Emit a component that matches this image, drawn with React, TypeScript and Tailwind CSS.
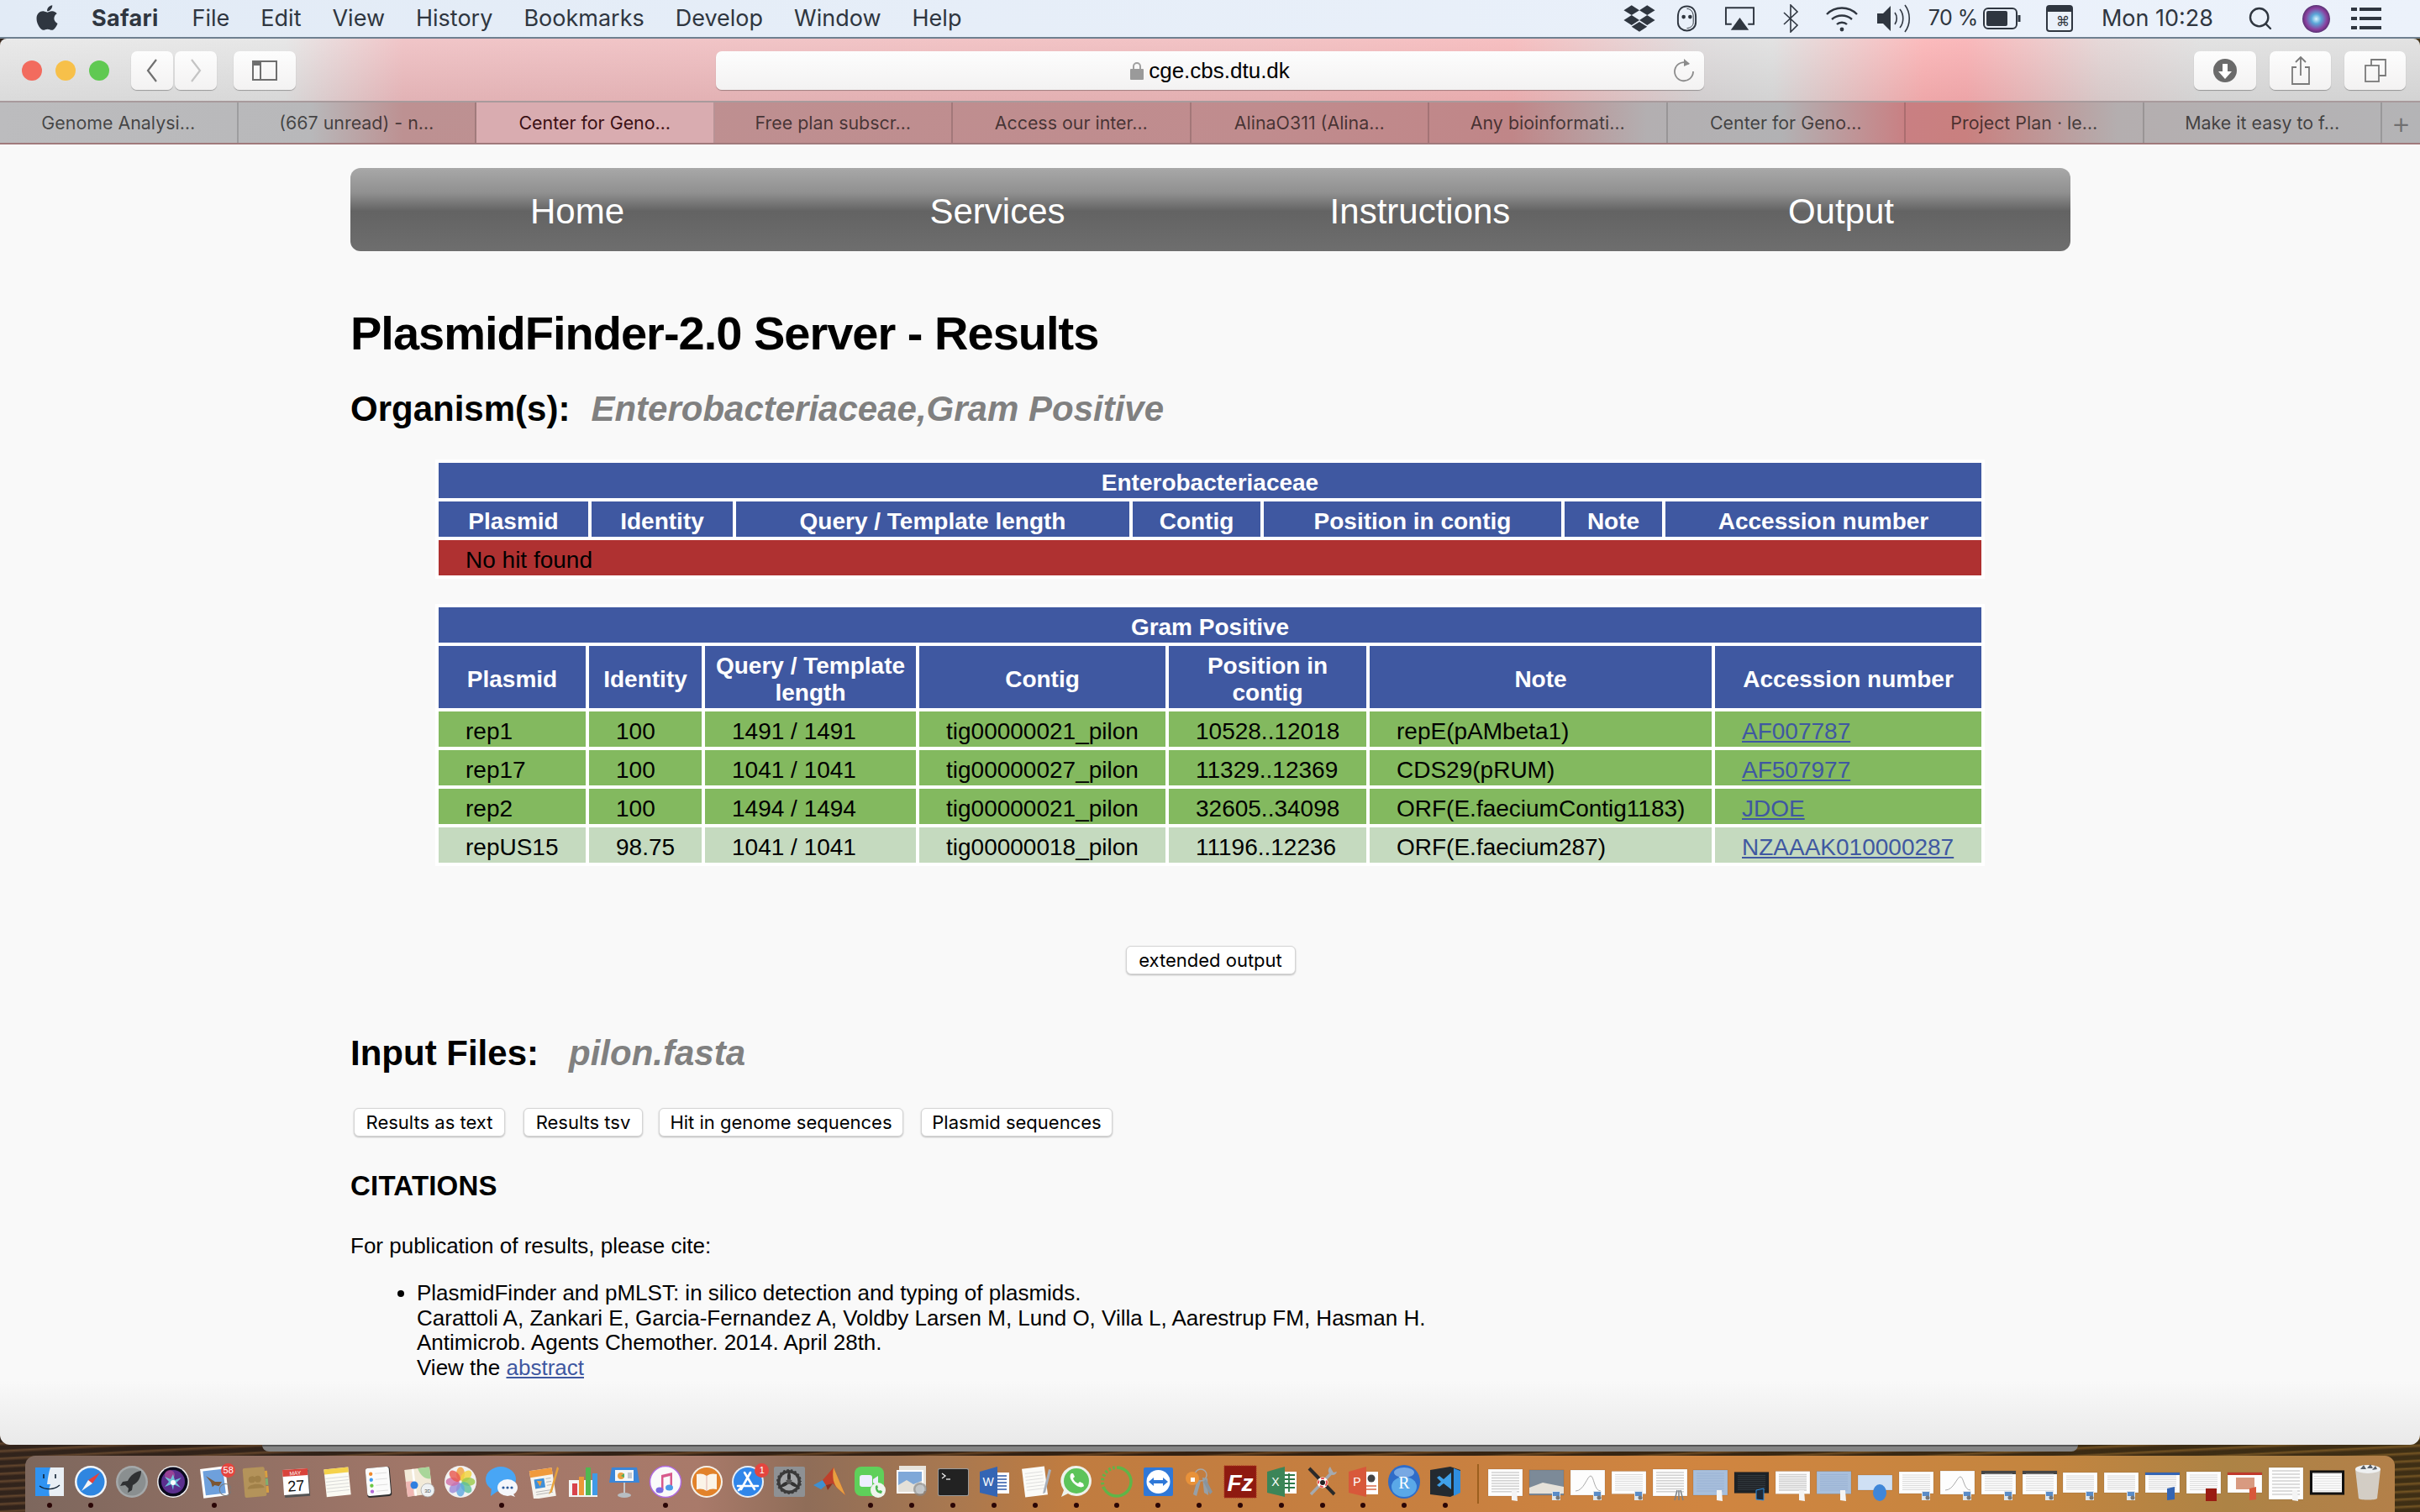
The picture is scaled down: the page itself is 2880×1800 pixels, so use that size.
import { Search } from "lucide-react";
import type { ReactNode } from "react";
import { FaApple, FaDropbox } from "react-icons/fa";

const menus = ["File", "Edit", "View", "History", "Bookmarks", "Develop", "Window", "Help"];
const tabs = [
  "Genome Analysi…",
  "(667 unread) - n…",
  "Center for Geno…",
  "Free plan subscr…",
  "Access our inter…",
  "AlinaO311 (Alina…",
  "Any bioinformati…",
  "Center for Geno…",
  "Project Plan · le…",
  "Make it easy to f…",
];

const headers = ["Plasmid", "Identity", "Query / Template length", "Contig", "Position in contig", "Note", "Accession number"];
const hits = [
  ["rep1", "100", "1491 / 1491", "tig00000021_pilon", "10528..12018", "repE(pAMbeta1)", "AF007787"],
  ["rep17", "100", "1041 / 1041", "tig00000027_pilon", "11329..12369", "CDS29(pRUM)", "AF507977"],
  ["rep2", "100", "1494 / 1494", "tig00000021_pilon", "32605..34098", "ORF(E.faeciumContig1183)", "JDOE"],
  ["repUS15", "98.75", "1041 / 1041", "tig00000018_pilon", "11196..12236", "ORF(E.faecium287)", "NZAAAK010000287"],
];

const Th = ({ children, span }: { children: ReactNode; span?: number }) => (
  <th colSpan={span} className="bg-[#3f58a1] px-2 pb-[2px] pt-[8px] text-center align-middle font-bold text-white">
    {children}
  </th>
);

const PageButton = ({ children, className }: { children: ReactNode; className: string }) => (
  <button className={`flex h-[34px] items-center justify-center rounded-[6px] border border-[#d4d4d4] bg-white font-['Inter',sans-serif] text-[22px] leading-none text-black shadow-[0_1px_2px_rgba(0,0,0,0.25)] ${className}`}>
    {children}
  </button>
);

// 맥 메뉴바 오른쪽 작은 아이콘들
const MenuIcons = () => (
  <div className="flex items-center text-[#2f3640]">
    <FaDropbox className="h-[36px] w-[38px]" />
    <svg viewBox="0 0 28 34" className="ml-[24px] h-[34px] w-[27px]" fill="none" stroke="currentColor" strokeWidth="2">
      <path d="M14 2c7 0 11 5 11 13v7c0 6-5 10-11 10S3 28 3 22v-7C3 7 7 2 14 2z" />
      <path d="M14 5c5 0 8 4 8 10v7c0 4-4 7-8 7" strokeWidth="1" />
      <circle cx="10" cy="15" r="2.4" fill="currentColor" stroke="none" />
      <circle cx="18" cy="15" r="2.4" fill="currentColor" stroke="none" />
    </svg>
    <svg viewBox="0 0 38 30" className="ml-[31px] h-[30px] w-[37px]" fill="none" stroke="currentColor" strokeWidth="2">
      <path d="M9 22H2V2h34v20h-7" />
      <path d="M19 14l11 15H8z" fill="currentColor" stroke="none" />
    </svg>
    <svg viewBox="0 0 20 34" className="ml-[32px] h-[34px] w-[20px]" fill="none" stroke="currentColor" strokeWidth="1.6">
      <path d="M2 10l16 15-8 8V1l8 8L2 24" />
    </svg>
    <svg viewBox="0 0 40 32" className="ml-[31px] h-[32px] w-[40px]" fill="none" stroke="currentColor" strokeWidth="2.4">
      <path d="M2 11c10-10 26-10 36 0M8 17c7-6 17-6 24 0M14 23c3-3 9-3 12 0" />
      <circle cx="20" cy="29" r="2.4" fill="currentColor" stroke="none" />
    </svg>
    <svg viewBox="0 0 42 36" className="ml-[21px] h-[36px] w-[42px]" fill="none" stroke="currentColor" strokeWidth="1.6">
      <path d="M1 12h7l9-9v30l-9-9H1z" fill="currentColor" stroke="none" />
      <path d="M22 11c3 4 3 10 0 14M28 7c5 6 5 16 0 22M34 2c7 9 7 23 0 32" />
    </svg>
    <span className="ml-[20px] text-[25px] tracking-[-0.5px]">70 %</span>
    <svg viewBox="0 0 46 28" className="ml-[6px] h-[28px] w-[46px]" fill="none" stroke="currentColor" strokeWidth="2">
      <rect x="1" y="2" width="39" height="24" rx="5" />
      <rect x="4" y="5" width="25" height="18" rx="2" fill="currentColor" stroke="none" />
      <path d="M43 10v8" strokeWidth="3" />
    </svg>
    <svg viewBox="0 0 32 34" className="ml-[29px] h-[34px] w-[32px]">
      <rect x="1" y="2" width="30" height="30" rx="3" fill="none" stroke="currentColor" strokeWidth="2" />
      <rect x="1" y="2" width="30" height="7" fill="currentColor" />
      <text x="20" y="26" fontSize="16" textAnchor="middle" fill="currentColor" fontFamily="DejaVu Sans">⌘</text>
    </svg>
    <span className="ml-[34px] text-[27px]">Mon 10:28</span>
    <Search className="ml-[40px] h-[32px] w-[32px]" strokeWidth={1.8} />
    <div className="ml-[34px] h-[33px] w-[33px] rounded-full bg-[radial-gradient(circle,#d8f4ff_0,#5aa7d8_25%,#8a3f9e_55%,#1b2240_90%)]" />
    <svg viewBox="0 0 36 30" className="ml-[25px] mr-[46px] h-[30px] w-[36px]" fill="currentColor">
      <rect x="0" y="2" width="7" height="4" /><rect x="10" y="2" width="26" height="4" />
      <rect x="0" y="13" width="7" height="4" /><rect x="10" y="13" width="26" height="4" />
      <rect x="0" y="24" width="7" height="4" /><rect x="10" y="24" width="26" height="4" />
    </svg>
  </div>
);

const ToolButton = ({ className, children }: { className: string; children: ReactNode }) => (
  <div className={`flex h-[46px] items-center justify-center rounded-[7px] bg-[linear-gradient(#fdfdfd,#f3f2f2)] shadow-[0_1px_1px_rgba(0,0,0,0.3)] ${className}`}>
    {children}
  </div>
);

// 독 아이콘 (40x40)
const icons: Record<string, ReactNode> = {
  finder: (
    <>
      <rect x="3" y="3" width="18" height="34" fill="#2f93f2" />
      <path d="M21 3h16v34H20c-1-5-1-8 1-14h-4c1-8 2-14 4-20z" fill="#e9eff5" />
      <path d="M13 11v5M27 11v5" stroke="#123" strokeWidth="1.6" />
      <path d="M8 25c7 5 17 5 24-1" fill="none" stroke="#123" strokeWidth="1.4" />
    </>
  ),
  safari: (
    <>
      <circle cx="20" cy="20" r="19" fill="#f2f5f8" />
      <circle cx="20" cy="20" r="16.5" fill="#2f86e0" />
      <path d="M31 9L17 18l5 4z" fill="#e8403a" />
      <path d="M9 31l8-13 5 4z" fill="#f5f5f5" />
    </>
  ),
  launchpad: (
    <>
      <circle cx="20" cy="20" r="19" fill="#a5a9aa" />
      <circle cx="20" cy="20" r="16.5" fill="#8a8f90" />
      <path d="M31 7c-8 1-13 6-16 12l-6 1-3 5 6-1 4 4-1 5 5-3 1-6c6-3 10-9 10-17z" fill="#2f3133" />
    </>
  ),
  siri: (
    <>
      <circle cx="20" cy="20" r="19" fill="#f0f0f0" />
      <circle cx="20" cy="20" r="17.5" fill="#0a0a1e" />
      <circle cx="20" cy="20" r="14" fill="#5b2f8e" />
      <circle cx="16" cy="12" r="6" fill="#b04a9a" opacity="0.7" />
      <path d="M20 11l2 7 8-3-6 6 5 6-8-4-1 7-2-7-8 3 5-6-5-6 7 3z" fill="#6fd8e4" opacity="0.85" />
      <circle cx="20" cy="21" r="3" fill="#fff" />
    </>
  ),
  mail: (
    <g transform="rotate(-7 20 20)">
      <rect x="5" y="3" width="30" height="35" fill="#fff" />
      <rect x="8" y="6" width="24" height="29" fill="#6ea0dc" />
      <path d="M11 12l10 8 8 1-4 5-5-2-3 2-1-6z" fill="#7b5533" />
      <circle cx="32" cy="31" r="7" fill="none" stroke="#777" strokeWidth="1" />
    </g>
  ),
  contacts: (
    <g transform="rotate(-5 20 20)">
      <rect x="6" y="3" width="26" height="35" rx="2" fill="#b4935a" />
      <rect x="32" y="8" width="3" height="8" fill="#d8a040" />
      <rect x="32" y="17" width="3" height="8" fill="#7fb070" />
      <rect x="32" y="26" width="3" height="8" fill="#d8a040" />
      <circle cx="16" cy="17" r="4" fill="#a08048" />
      <circle cx="23" cy="17" r="4" fill="#a08048" />
      <path d="M10 28c0-7 20-7 20 0z" fill="#a08048" />
    </g>
  ),
  calendar: (
    <g transform="rotate(-4 20 20)">
      <rect x="6" y="7" width="30" height="31" fill="#555" />
      <rect x="5" y="5" width="30" height="30" fill="#fff" />
      <rect x="5" y="5" width="30" height="8" fill="#d9423a" />
      <text x="20" y="12" fontSize="6.5" textAnchor="middle" fill="#fff" fontFamily="Liberation Sans">MAY</text>
      <text x="20" y="31" fontSize="18" textAnchor="middle" fill="#111" fontFamily="Liberation Sans">27</text>
    </g>
  ),
  notes: (
    <g transform="rotate(-6 20 20)">
      <rect x="6" y="4" width="29" height="33" fill="#fbfbf4" />
      <rect x="6" y="4" width="29" height="6" fill="#f5d24a" />
      <path d="M7 15h27M7 19h27M7 23h27M7 27h27M7 31h27" stroke="#ccc" strokeWidth="0.7" />
    </g>
  ),
  reminders: (
    <g transform="rotate(-5 20 20)">
      <rect x="6" y="3" width="29" height="35" rx="3" fill="#2f2f2f" />
      <rect x="6" y="3" width="28" height="33" rx="3" fill="#fbfbfb" />
      <circle cx="12" cy="10" r="2.2" fill="#f08a2c" />
      <circle cx="12" cy="17" r="2.2" fill="#3f9bf0" />
      <circle cx="12" cy="24" r="2.2" fill="#6cc744" />
      <circle cx="12" cy="31" r="2.2" fill="#b36ad8" />
      <path d="M17 10h14M17 17h14M17 24h14M17 31h14" stroke="#d8d8d8" strokeWidth="0.8" />
    </g>
  ),
  maps: (
    <>
      <g transform="rotate(-7 20 20)">
        <rect x="4" y="4" width="30" height="32" fill="#f2ead8" />
        <path d="M20 4h14v14c-8 0-12-6-14-14z" fill="#a9d69a" />
        <path d="M4 18h8v18H4z" fill="#f0b8b4" />
        <path d="M14 4v32" stroke="#fff" strokeWidth="2.5" />
      </g>
      <circle cx="14" cy="24" r="4.5" fill="#2f7fe0" />
      <circle cx="30" cy="30" r="8" fill="#eef1f3" stroke="#aaa" strokeWidth="0.8" />
      <text x="30" y="33" fontSize="6" textAnchor="middle" fill="#555" fontFamily="Liberation Sans">3D</text>
    </>
  ),
  photos: (
    <>
      <circle cx="20" cy="20" r="19" fill="#f1f1f1" />
      {["#f0a03c", "#f2d33d", "#9ccb4c", "#5fbf9a", "#5fa8e0", "#9c8ad8", "#d070a8", "#e85a50"].map((c, i) => (
        <ellipse key={c} cx="20" cy="10.5" rx="5" ry="8" fill={c} opacity="0.82" transform={`rotate(${i * 45} 20 20)`} />
      ))}
    </>
  ),
  messages: (
    <>
      <ellipse cx="19" cy="17" rx="18" ry="15" fill="#48a6f5" />
      <path d="M8 26l-1 11 10-7z" fill="#48a6f5" />
      <ellipse cx="27" cy="27" rx="12" ry="10" fill="#f5f7fb" />
      <path d="M33 33l3 5-8-3z" fill="#f5f7fb" />
      <circle cx="22" cy="27" r="1.6" fill="#2c5c9c" />
      <circle cx="27" cy="27" r="1.6" fill="#2c5c9c" />
      <circle cx="32" cy="27" r="1.6" fill="#2c5c9c" />
    </>
  ),
  pages: (
    <>
      <g transform="rotate(-9 20 20)">
        <rect x="6" y="5" width="27" height="34" fill="#f5f3ee" />
        <rect x="6" y="5" width="27" height="8" fill="#f09a3c" />
        <rect x="10" y="16" width="12" height="11" fill="#3f8fd8" />
        <path d="M13 18l6 1-3 6z" fill="#f0a040" />
        <path d="M24 17h6M24 21h6M24 25h6M10 31h20M10 34h20" stroke="#aaa" strokeWidth="0.8" />
      </g>
      <path d="M37 2l-8 28-2 5 4-3 8-28z" fill="#e8a23a" />
    </>
  ),
  numbers: (
    <>
      <rect x="3" y="18" width="34" height="20" fill="#f3f5f5" />
      <rect x="7" y="22" width="6" height="14" fill="#d8444c" />
      <rect x="15" y="14" width="6" height="22" fill="#ec9838" />
      <rect x="23" y="3" width="6" height="33" fill="#50b850" />
      <rect x="31" y="10" width="6" height="26" fill="#3f9be8" />
    </>
  ),
  keynote: (
    <>
      <path d="M5 3h30l3 18H2z" fill="#3b86d8" />
      <rect x="9" y="6" width="22" height="13" fill="#f4f6f8" />
      <circle cx="16" cy="13" r="4" fill="#e8a040" />
      <path d="M16 13l4-3v5z" fill="#50b060" />
      <rect x="24" y="9" width="5" height="7" fill="#c0c8d0" />
      <rect x="19" y="21" width="2" height="13" fill="#c8c8c8" />
      <ellipse cx="20" cy="36" rx="8" ry="3" fill="#b8bec2" />
    </>
  ),
  itunes: (
    <>
      <circle cx="20" cy="20" r="18.5" fill="#fafafa" stroke="#b06ae0" strokeWidth="1.5" />
      <path d="M15 12l13-3v18h-2.500V13l-8 2v15h-2.500z" fill="#d75a8c" />
      <ellipse cx="13" cy="30" rx="4.500" ry="3.500" fill="#7a6ae0" />
      <ellipse cx="24.500" cy="27" rx="4.500" ry="3.500" fill="#4a9ae8" />
    </>
  ),
  books: (
    <>
      <circle cx="20" cy="20" r="19" fill="#f5f1ea" />
      <circle cx="20" cy="20" r="17" fill="#e2822a" />
      <path d="M20 13c-4-3-8-3-12-2v18c4-1 8-1 12 2 4-3 8-3 12-2V11c-4-1-8-1-12 2z" fill="#fbf4e8" />
      <path d="M20 13v18" stroke="#c88" strokeWidth="0.6" />
    </>
  ),
  appstore: (
    <>
      <circle cx="20" cy="20" r="19" fill="#e8eef5" />
      <circle cx="20" cy="20" r="17" fill="#2f86ea" />
      <path d="M23 9L12 29M16 9l12 20M8 25h24M9 30l3-3" stroke="#fff" strokeWidth="2.6" strokeLinecap="round" fill="none" />
    </>
  ),
  prefs: (
    <>
      <rect x="2" y="2" width="37" height="36" rx="2" fill="#8e9194" />
      <circle cx="20" cy="20" r="15" fill="#3a3a3a" />
      <circle cx="20" cy="20" r="15" fill="none" stroke="#8e9194" strokeWidth="2" strokeDasharray="2.500 2.500" />
      <circle cx="20" cy="20" r="10.500" fill="#a2a4a6" />
      <path d="M20 20c-1-4-1-8 0-10 1 2 1 6 0 10zM20 20c4 1 7 3 9 5-3 0-6-2-9-5zM20 20c-4 1-7 3-9 5 3 0 6-2 9-5z" fill="#333" stroke="#333" strokeWidth="2.500" />
      <circle cx="20" cy="20" r="3" fill="#555" />
    </>
  ),
  matlab: (
    <>
      <path d="M1 24l11-6 4 6-6 5z" fill="#3f8fd0" />
      <path d="M12 18L25 3l14 33-9-8-6-6-8 2z" fill="#c0402a" />
      <path d="M25 3c-2 12 0 20 5 25l9 8z" fill="#e8a040" />
      <path d="M16 24l8-2-6 8z" fill="#8a3020" />
    </>
  ),
  facetime: (
    <>
      <rect x="1" y="2" width="35" height="35" rx="8" fill="#5fd05a" />
      <rect x="7" y="12" width="15" height="14" rx="3" fill="#eef" />
      <path d="M23 17l6-4v12l-6-4z" fill="#eef" />
      <circle cx="29" cy="30" r="9" fill="#eef4ee" />
      <path d="M26 25c-1 5 2 9 7 9l1-3-3-1-1 1-2-3 1-1-1-3z" fill="#4bb850" />
    </>
  ),
  preview: (
    <>
      <rect x="5" y="1" width="32" height="30" fill="#e8e4dc" />
      <rect x="2" y="6" width="32" height="28" fill="#fff" />
      <path d="M4 8h28v24H4z" fill="#7fa8d8" />
      <path d="M4 24l10-6 8 5 10-4v13H4z" fill="#e4e0d8" />
      <circle cx="30" cy="29" r="8" fill="#888" opacity="0.7" />
      <circle cx="30" cy="29" r="5.500" fill="#cfd4d8" opacity="0.7" />
    </>
  ),
  terminal: (
    <>
      <rect x="2" y="4" width="37" height="33" rx="2" fill="#9a9a9a" />
      <rect x="3" y="5" width="35" height="31" rx="1.500" fill="#222" />
      <path d="M7 10l4 3-4 3" stroke="#eee" strokeWidth="1.300" fill="none" />
      <path d="M12 17h5" stroke="#eee" strokeWidth="1.300" />
    </>
  ),
  word: (
    <>
      <rect x="20" y="9" width="18" height="25" fill="#fff" />
      <path d="M23 13h12M23 17h12M23 21h12M23 25h12M23 29h12" stroke="#2f5aa8" strokeWidth="1.500" />
      <path d="M3 8l21-6v36L3 33z" fill="#3465b4" />
      <text x="13" y="25" fontSize="14" textAnchor="middle" fill="#fff" fontFamily="Liberation Sans">W</text>
    </>
  ),
  textedit: (
    <>
      <g transform="rotate(-7 20 20)">
        <rect x="6" y="3" width="27" height="34" fill="#fbfbf8" />
        <path d="M9 9h21M9 13h21M9 17h21M9 21h21M9 25h21M9 29h21" stroke="#d4d4d4" strokeWidth="0.700" />
      </g>
      <path d="M36 5l-7 29 3-1 7-27z" fill="#a8b0bc" />
    </>
  ),
  whatsapp: (
    <>
      <path d="M20 1a18 18 0 1 1-10 33L2 38l3-8A18 18 0 0 1 20 1z" fill="#eef2ec" />
      <circle cx="20" cy="19" r="15" fill="#5cc45a" />
      <path d="M14 10c-3 3-1 8 3 12s9 6 12 3l-1-3-4-2-2 2c-3-1-5-3-6-6l2-2-2-4z" fill="#fff" />
    </>
  ),
  ring: (
    <>
      <path d="M20 3a17 17 0 1 1-15 25" fill="none" stroke="#5fb548" strokeWidth="3.500" />
      <path d="M5 28A17 17 0 0 1 20 3" fill="none" stroke="#5fb548" strokeWidth="4" strokeDasharray="2.500 2.500" />
    </>
  ),
  teamviewer: (
    <>
      <rect x="3" y="3" width="35" height="34" rx="2" fill="#2f78d8" />
      <circle cx="20.500" cy="20" r="14" fill="#fff" />
      <path d="M9 20l6-5v3h11v-3l6 5-6 5v-3H15v3z" fill="#2f78d8" />
    </>
  ),
  keychain: (
    <>
      <circle cx="22" cy="12" r="7" fill="none" stroke="#a8a8a8" strokeWidth="1.500" />
      <path d="M24 15l2 18 5 3-1-20zM18 17l-5 18 4 2 5-18z" fill="#96a0a8" />
      <path d="M28 17l8 15-3 3-8-15z" fill="#8a949c" />
      <circle cx="12" cy="16" r="8" fill="#e8923a" />
      <path d="M10 15h5v5h-5z" fill="#fff" />
    </>
  ),
  filezilla: (
    <>
      <rect x="1" y="1" width="38" height="38" fill="#8e1a10" stroke="#a8301e" strokeDasharray="1.500 1" />
      <text x="20" y="31" fontSize="28" textAnchor="middle" fill="#fff" fontStyle="italic" fontWeight="bold" fontFamily="Liberation Sans">Fz</text>
    </>
  ),
  excel: (
    <>
      <rect x="20" y="8" width="18" height="26" fill="#fff" />
      <path d="M24 12h12M24 17h12M24 22h12M24 27h12M29 10v22" stroke="#2f7a4a" strokeWidth="1.800" />
      <path d="M3 8l21-6v36L3 33z" fill="#3c8558" />
      <text x="13" y="25" fontSize="14" textAnchor="middle" fill="#fff" fontFamily="Liberation Sans">X</text>
    </>
  ),
  colorsync: (
    <>
      <path d="M4 4l30 31" stroke="#2a2a2a" strokeWidth="4" />
      <path d="M6 35L31 9" stroke="#a4aab0" strokeWidth="3.500" />
      <path d="M29 2c-3 3-3 7 0 9 3 2 7 1 8-3l-4 1-2-3z" fill="#a4aab0" />
      <circle cx="20" cy="21" r="6.500" fill="#fff" />
      <circle cx="20" cy="21" r="5" fill="none" stroke="#e85050" strokeWidth="2" strokeDasharray="4 3" />
      <circle cx="20" cy="21" r="3" fill="#222" />
    </>
  ),
  powerpoint: (
    <>
      <rect x="20" y="8" width="18" height="27" fill="#fff" />
      <circle cx="30" cy="16" r="4.500" fill="#444" />
      <path d="M24 25h12M24 29h12" stroke="#d96a4a" strokeWidth="1.500" />
      <path d="M3 8l21-6v36L3 33z" fill="#d8583a" />
      <text x="13" y="25" fontSize="14" textAnchor="middle" fill="#fff" fontFamily="Liberation Sans">P</text>
    </>
  ),
  r: (
    <>
      <ellipse cx="20" cy="20" rx="19" ry="20" fill="#2f6cc8" />
      <ellipse cx="20" cy="26" rx="15" ry="12" fill="#5aa8e8" />
      <ellipse cx="20" cy="9" rx="12" ry="6" fill="#8ab8ea" opacity="0.8" />
      <text x="20" y="28" fontSize="20" textAnchor="middle" fill="#fff" fontFamily="Liberation Serif">R</text>
    </>
  ),
  vscode: (
    <>
      <path d="M2 6l24-4 12 4v26l-12 6-24-3z" fill="#232a30" />
      <path d="M30 4l8 3v26l-8 4z" fill="#2f8ee0" />
      <path d="M27 9v20l-9-7-5 4-3-2 5-4-5-5 3-2 5 4z" fill="#3fa0e8" />
    </>
  ),
};

const apps: [string, boolean, string?][] = [
  ["finder", true], ["safari", true], ["launchpad", false], ["siri", false], ["mail", true, "58"],
  ["contacts", false], ["calendar", false], ["notes", false], ["reminders", false], ["maps", false],
  ["photos", false], ["messages", true], ["pages", false], ["numbers", false], ["keynote", false],
  ["itunes", true], ["books", false], ["appstore", false, "1"], ["prefs", false], ["matlab", false],
  ["facetime", true], ["preview", true], ["terminal", true], ["word", true], ["textedit", true],
  ["whatsapp", true], ["ring", true], ["teamviewer", true], ["keychain", true], ["filezilla", true],
  ["excel", true], ["colorsync", true], ["powerpoint", true], ["r", true], ["vscode", true],
];

type ThumbKind = "sheet" | "photo" | "chart" | "doc" | "blue" | "dark" | "light" | "web" | "word" | "slide" | "dense" | "tablet";
const thumbs: [ThumbKind, number, string?][] = [
  ["sheet", 32, "note"], ["photo", 30, "preview"], ["chart", 30, "preview"], ["doc", 27, "preview"],
  ["sheet", 32, "keys"], ["blue", 30, "note"], ["dark", 25, "code"], ["sheet", 27, "note"],
  ["blue", 27, "note"], ["light", 18, "r"], ["doc", 26, "preview"], ["chart", 28, "preview"],
  ["web", 28, "preview"], ["web", 28, "preview"], ["doc", 24, "preview"], ["doc", 24, "preview"],
  ["word", 24, "word"], ["doc", 26, "fz"], ["slide", 24, "ppt"], ["dense", 38, "note"], ["tablet", 29],
];

const ThumbBadge = ({ kind }: { kind: string }) => {
  if (kind === "note") return <path d="M32 30h6l1 13-7-1z" fill="#f4f4f4" />;
  if (kind === "preview")
    return (
      <>
        <rect x="31" y="31" width="10" height="11" fill="#dfe5ea" />
        <rect x="32" y="32" width="8" height="5" fill="#5a8cc8" />
        <circle cx="38" cy="39" r="2.500" fill="#777" />
      </>
    );
  if (kind === "keys") return <path d="M33 30l-3 12M35 30v12M37 30l3 12" stroke="#7a8288" strokeWidth="1.500" />;
  if (kind === "code") return <path d="M30 30l9-2v14l-9-1z" fill="#1d2a3a" stroke="#2f8ee0" />;
  if (kind === "r") return <ellipse cx="30" cy="33" rx="8" ry="10" fill="#3f86d8" />;
  if (kind === "word") return <path d="M30 28l9-2v15l-9 1z" fill="#3465b4" />;
  if (kind === "fz") return <rect x="27" y="28" width="13" height="15" fill="#9a1c12" />;
  if (kind === "ppt") return <path d="M30 28l8-2v15l-8 1z" fill="#d8583a" />;
  return null;
};

const Thumb = ({ kind, h, badge }: { kind: ThumbKind; h: number; badge?: string }) => {
  const y = kind === "dense" ? 3 : 22 - h / 2 - 1;
  const bg = kind === "blue" ? "#a8bfdc" : kind === "dark" ? "#1e2226" : kind === "light" ? "#cfe0f4" : kind === "photo" ? "#7c8a98" : kind === "tablet" ? "#111" : "#fdfdfd";
  const ys = Array.from({ length: 8 }, (_, i) => y + 4 + i * ((h - 6) / 8));
  return (
    <svg viewBox="0 0 48 44" className="h-[44px] w-[48px]">
      <rect x="4" y={y} width="41" height={h} fill={bg} stroke="#00000030" strokeWidth="0.5" />
      {kind === "tablet" && <rect x="7" y={y + 3} width="35" height={h - 6} fill="#fff" />}
      {kind === "photo" && <path d={`M4 ${y + h - 9}l16-6 25 5v8H4z`} fill="#e6e2da" />}
      {kind === "web" && <rect x="4" y={y} width="41" height="4" fill="#444" />}
      {kind === "word" && <rect x="4" y={y} width="41" height="3" fill="#3465b4" />}
      {kind === "slide" && <rect x="4" y={y} width="41" height="3" fill="#c0392b" />}
      {kind === "slide" && <rect x="14" y={y + 6} width="22" height={h - 10} fill="#d89a80" />}
      {kind === "chart" && <path d={`M10 ${y + h - 5}c10 0 14-${h - 12} 18-${h - 12}s4 ${h - 12} 12 ${h - 12}`} stroke="#888" fill="none" strokeWidth="0.7" />}
      {(kind === "sheet" || kind === "doc" || kind === "web" || kind === "word" || kind === "dense" || kind === "dark" || kind === "blue" || kind === "tablet") &&
        ys.map((ly) => (
          <path key={ly} d={`M8 ${ly}h33`} stroke={kind === "dark" ? "#3a4248" : kind === "blue" ? "#98b0d2" : "#d0d0d0"} strokeWidth={kind === "sheet" || kind === "dense" ? 1.6 : 0.8} />
        ))}
      {badge && <ThumbBadge kind={badge} />}
    </svg>
  );
};

const Dock = () => (
  <div className="ml-[30px] mt-[5px] flex h-[67px] w-[2820px] shrink-0 rounded-t-[12px] bg-[linear-gradient(90deg,#7d675d_0,#a07668_450px,#a97a6a_800px,#8f6d58_930px,#a87850_1100px,#c07c40_1240px,#c88040_1700px,#d08540_2000px,#c4853f_2400px,#ad8345_2620px,#b38049_2820px)] pl-[5px]">
    {apps.map(([name, running, badge]) => (
      <div key={name} className="relative flex h-full w-[48.85px] shrink-0 flex-col items-center pt-[11px]">
        <svg viewBox="0 0 40 40" className="h-[40px] w-[40px] shrink-0">{icons[name]}</svg>
        {running && <div className="mt-[5px] h-[6px] w-[6px] rounded-full bg-[#2a0505]" />}
        {badge && (
          <span className="absolute right-[-1px] top-[9px] flex h-[17px] min-w-[17px] items-center justify-center rounded-full bg-[#e5453f] px-[2px] text-[11px] leading-none text-white">
            {badge}
          </span>
        )}
      </div>
    ))}
    <div className="ml-[13px] mt-[10px] h-[47px] w-[2px] shrink-0 bg-[#9c5f1e]" />
    <div className="ml-[7px] flex">
      {thumbs.map(([kind, h, badge], i) => (
        <div key={i} className="flex w-[48.9px] shrink-0 justify-center pt-[11px]">
          <Thumb kind={kind} h={h} badge={badge} />
        </div>
      ))}
      <div className="flex w-[48.9px] shrink-0 justify-center pt-[9px]">
        <svg viewBox="0 0 32 44" className="h-[44px] w-[32px]">
          <path d="M1 7l4 35c3 2 19 2 22 0l4-35z" fill="#d8dadb" opacity="0.85" />
          <ellipse cx="16" cy="7" rx="15" ry="5" fill="#eef0f1" />
          <path d="M7 7l4-5 3 5zM15 6l4-5 3 5zM21 8l4-5 2 4z" fill="#5a6068" />
        </svg>
      </div>
    </div>
  </div>
);

const App = () => {
  const sans = "font-['Liberation_Sans',Arial,sans-serif]";
  return (
    <div className={`flex h-[1800px] w-[2880px] flex-col overflow-hidden bg-[repeating-linear-gradient(177deg,rgba(30,18,10,0.65)_0,rgba(30,18,10,0.65)_4px,rgba(110,70,30,0.5)_6px,rgba(40,24,14,0.7)_9px),linear-gradient(90deg,#55443c,#5a3c20_50%,#7a6428)] ${sans}`}>
      {/* 메뉴바 */}
      <div className="flex h-[46px] shrink-0 items-center justify-between border-b-[2px] border-[#6f8090] bg-[linear-gradient(90deg,#e2ebf6,#ecf2fb)] font-['Inter',sans-serif] text-[27px] text-[#2f3640]">
        <div className="flex items-center">
          <FaApple className="ml-[41px] h-[34px] w-[30px] -translate-y-[1px]" />
          <span className="ml-[38px] font-bold tracking-[0.3px]">Safari</span>
          <div className="ml-[40px] flex gap-[37px]">
            {menus.map((m) => (
              <span key={m}>{m}</span>
            ))}
          </div>
        </div>
        <MenuIcons />
      </div>

      {/* 사파리 툴바 */}
      <div className="flex h-[74px] shrink-0 items-center rounded-t-[8px] bg-[linear-gradient(180deg,rgba(255,255,255,0.14),rgba(0,0,0,0.05)),linear-gradient(90deg,#e6e6e6_0,#e3e3e3_340px,#eebcbf_480px,#f0b9bb_1500px,#f5b5b7_1800px,#dcd8d9_2020px,#dedede_2110px,#fbb0b2_2290px,#f9adb0_2340px,#e2d2d2_2500px,#dedede_2620px)] pl-[26px] pt-[2px]">
        <div className="flex gap-[16px]">
          <div className="h-[24px] w-[24px] rounded-full bg-[#f26b5e]" />
          <div className="h-[24px] w-[24px] rounded-full bg-[#f7c04a]" />
          <div className="h-[24px] w-[24px] rounded-full bg-[#60c952]" />
        </div>
        <ToolButton className="ml-[26px] w-[50px]">
          <svg viewBox="0 0 14 30" className="h-[30px] w-[14px]" fill="none" stroke="#707070" strokeWidth="2.2"><path d="M12 2L2 15l10 13" /></svg>
        </ToolButton>
        <ToolButton className="ml-[2px] w-[50px]">
          <svg viewBox="0 0 14 30" className="h-[30px] w-[14px]" fill="none" stroke="#c4c4c4" strokeWidth="2.2"><path d="M2 2l10 13L2 28" /></svg>
        </ToolButton>
        <ToolButton className="ml-[20px] w-[74px]">
          <svg viewBox="0 0 30 24" className="h-[24px] w-[30px]" fill="none" stroke="#6e6e6e" strokeWidth="2"><rect x="1" y="1" width="28" height="22" /><path d="M10 1v22" /><path d="M2 2h8v3H2z" fill="#6e6e6e" /></svg>
        </ToolButton>
        <ToolButton className="relative ml-[500px] w-[1176px] gap-[6px]">
          <svg viewBox="0 0 16 22" className="h-[22px] w-[16px]"><path d="M4 9V6a4 4 0 0 1 8 0v3" fill="none" stroke="#a0a0a0" strokeWidth="2" /><rect x="0" y="9" width="16" height="13" rx="1" fill="#9a9a9a" /></svg>
          <span className={`text-[26px] text-black ${sans}`}>cge.cbs.dtu.dk</span>
          <svg viewBox="0 0 24 30" className="absolute right-[12px] top-[8px] h-[30px] w-[24px]" fill="none" stroke="#8c8c8c" strokeWidth="1.8"><path d="M18 7a11 11 0 1 0 5 9" /><path d="M12 1l7 6-7 3z" fill="#8c8c8c" stroke="none" /></svg>
        </ToolButton>
        <div className="ml-auto flex gap-[16px] pr-[17px]">
          <ToolButton className="w-[74px]">
            <svg viewBox="0 0 28 28" className="h-[28px] w-[28px]"><circle cx="14" cy="14" r="14" fill="#6a6a6a" /><path d="M11 6h6v9h5l-8 9-8-9h5z" fill="#fff" /></svg>
          </ToolButton>
          <ToolButton className="w-[73px]">
            <svg viewBox="0 0 24 36" className="h-[36px] w-[24px]" fill="none" stroke="#7a7a7a" strokeWidth="1.8"><path d="M7 14H2v20h20V14h-5M12 24V2M6 8l6-6 6 6" /></svg>
          </ToolButton>
          <ToolButton className="w-[73px]">
            <svg viewBox="0 0 28 30" className="h-[30px] w-[28px]" fill="none" stroke="#7a7a7a" strokeWidth="1.8"><rect x="2" y="9" width="16" height="19" /><path d="M9 9V2h17v19h-8" /></svg>
          </ToolButton>
        </div>
      </div>

      {/* 탭바 */}
      <div className="flex h-[52px] shrink-0 border-y-[2px] border-b-[#a07a7c] border-t-[#a89a9c] bg-[linear-gradient(90deg,#bcbcbe_0,#b8b8ba_370px,#bd9192_480px,#c08c8e_1500px,#c08688_1800px,#b3afb1_1960px,#b2b2b4_2120px,#c97f82_2270px,#c9807f_2340px,#b4aeaf_2520px,#b4b4b6_2880px)] font-['Inter',sans-serif] text-[21.4px] text-black/65">
        {tabs.map((t, i) => (
          <div key={i} className={`flex w-[283.5px] items-center justify-center border-r-[2px] border-black/15 ${i === 2 ? "bg-[#d9acb0] text-[#3a1014]" : ""}`}>
            {t}
          </div>
        ))}
        <div className="flex flex-1 items-center justify-center text-[36px] font-light text-black/40">+</div>
      </div>

      {/* 페이지 본문 */}
      <div className="h-[1548px] shrink-0 rounded-b-[12px] bg-[linear-gradient(#f9f9f9_95%,#e9e9e9)] pl-[417px] pr-[416px] pt-[28px] text-[28px] leading-[30px] text-black">
        <nav className="grid h-[99px] grid-cols-[540px_460px_546px_456px] items-center rounded-[12px] bg-[linear-gradient(#a8a8a8,#909090_30%,#636363_52%,#6e6e6e)] pt-[4px] text-center text-[42px] text-white">
          <span>Home</span>
          <span>Services</span>
          <span>Instructions</span>
          <span>Output</span>
        </nav>

        <h1 className="mt-[66px] text-[56px] font-bold leading-[64px] tracking-[-1px]">PlasmidFinder-2.0 Server - Results</h1>
        <h2 className="mt-[33px] flex text-[42px] font-bold leading-[50px]">
          Organism(s):
          <em className="ml-[25px] text-[#808080]">Enterobacteriaceae,Gram Positive</em>
        </h2>

        <table className="ml-[101px] mt-[35px] w-[1844px] table-fixed border-separate border-spacing-[4px] bg-white leading-[32px]">
          <colgroup>
            {[178, 168, 468, 152, 354, 116, 376].map((w) => (
              <col key={w} style={{ width: w }} />
            ))}
          </colgroup>
          <tbody>
            <tr>
              <Th span={7}>Enterobacteriaceae</Th>
            </tr>
            <tr>
              {headers.map((h) => (
                <Th key={h}>{h}</Th>
              ))}
            </tr>
            <tr>
              <td colSpan={7} className="bg-[#af3131] px-[32px] pb-[2px] pt-[8px]">No hit found</td>
            </tr>
          </tbody>
        </table>

        <table className="ml-[101px] mt-[30px] w-[1844px] table-fixed border-separate border-spacing-[4px] bg-white leading-[32px]">
          <colgroup>
            {[175, 134, 251, 293, 235, 407, 317].map((w) => (
              <col key={w} style={{ width: w }} />
            ))}
          </colgroup>
          <tbody>
            <tr>
              <Th span={7}>Gram Positive</Th>
            </tr>
            <tr>
              {headers.map((h) => (
                <Th key={h}>{h}</Th>
              ))}
            </tr>
            {hits.map((row, i) => (
              <tr key={row[0]}>
                {row.map((cell, j) => (
                  <td key={j} className={`whitespace-nowrap pb-[2px] pl-[32px] pt-[8px] ${i === 3 ? "bg-[#c5dabf]" : "bg-[#83b95f]"}`}>
                    {j === 6 ? <a href="#" className="text-[#3f58a1] underline">{cell}</a> : cell}
                  </td>
                ))}
              </tr>
            ))}
          </tbody>
        </table>

        <div className="mt-[95px] flex justify-center">
          <PageButton className="w-[202px]">extended output</PageButton>
        </div>

        <h2 className="mt-[69px] flex text-[42px] font-bold leading-[50px]">
          Input Files:
          <em className="ml-[36px] text-[#808080]">pilon.fasta</em>
        </h2>

        <div className="ml-[4px] mt-[40px] flex">
          <PageButton className="w-[180px]">Results as text</PageButton>
          <PageButton className="ml-[22px] w-[142px]">Results tsv</PageButton>
          <PageButton className="ml-[19px] w-[291px]">Hit in genome sequences</PageButton>
          <PageButton className="ml-[21px] w-[228px]">Plasmid sequences</PageButton>
        </div>

        <h3 className="mt-[39px] text-[33px] font-bold leading-[40px] tracking-[0.2px]">CITATIONS</h3>
        <p className="mt-[36px] text-[26px]">For publication of results, please cite:</p>
        <ul className="mt-[27px] list-disc pl-[79px] text-[26px] leading-[29.7px]">
          <li>
            PlasmidFinder and pMLST: in silico detection and typing of plasmids.
            <br />
            Carattoli A, Zankari E, Garcia-Fernandez A, Voldby Larsen M, Lund O, Villa L, Aarestrup FM, Hasman H.
            <br />
            Antimicrob. Agents Chemother. 2014. April 28th.
            <br />
            View the <a href="#" className="text-[#3f58a1] underline">abstract</a>
          </li>
        </ul>
      </div>

      {/* 뒤쪽 창 */}
      <div className="ml-[312px] h-[8px] w-[2161px] shrink-0 rounded-b-[10px] border-t-[2px] border-[#555] bg-[#858585]" />
      <Dock />
    </div>
  );
};

export default App;
